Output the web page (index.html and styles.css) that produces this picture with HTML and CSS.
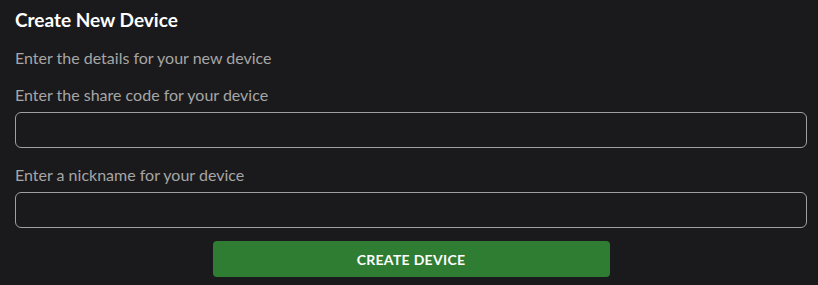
FILE: index.html
```html
<!DOCTYPE html>
<html lang="en">
<head>
    <meta charset="UTF-8">
    <meta name="viewport" content="width=device-width, initial-scale=1.0">
    <title>Create New Device</title>
<link rel="stylesheet" href="styles.css">
</head>
<body>
    <div class="devicebox">
        <h2 class="title">Create New Device</h2>
        <p class="subtitle">Enter the details for your new device</p>
        <form class="deviceform">
            <label for="sharecode">Enter the share code for your device</label>
            <input type="text" id="sharecode" name="sharecode">
            <label for="nickname">Enter a nickname for your device</label>
            <input type="text" id="nickname" name="nickname">
            <div class="buttons">
                <button type="submit" class="create-device">CREATE DEVICE</button>
            </div>
        </form>
    </div>
</body>
</html>
```

FILE: styles.css
```css
body{
    background-color: #1a1a1c;
    margin: 0;
    font-family: Lato, "Noto Sans", sans-serif;
}
.devicebox{
    padding: 10px 11px 0 15px;
}
.title{
    margin: 0;
    font-size: 19px;
    font-weight: 700;
    color: #ffffff;
    line-height: 20px;
}
.subtitle{
    margin: 18px 0 0 0;
    font-size: 16px;
    color: #a6a6a6;
    line-height: 20px;
}
.deviceform{
    display: flex;
    flex-direction: column;
    margin-top: 17px;
}
.deviceform label{
    font-size: 16px;
    color: #a6a6a6;
    line-height: 20px;
}
.deviceform input{
    box-sizing: border-box;
    height: 36px;
    margin: 7px 0 17px 0;
    background-color: transparent;
    border: 1px solid #a0a0a0;
    border-radius: 6px;
    color: #ffffff;
    font-size: 15px;
    padding: 0 12px;
}
.deviceform input:last-of-type{
    margin-bottom: 13px;
}
.buttons{
    display: flex;
    justify-content: center;
}
.buttons button{
    width: 397px;
    height: 36px;
    background-color: #2e7d32;
    border: none;
    border-radius: 4px;
    color: #ffffff;
    font-family: Lato, "Noto Sans", sans-serif;
    font-size: 14px;
    font-weight: 700;
    letter-spacing: 0.3px;
}
```
